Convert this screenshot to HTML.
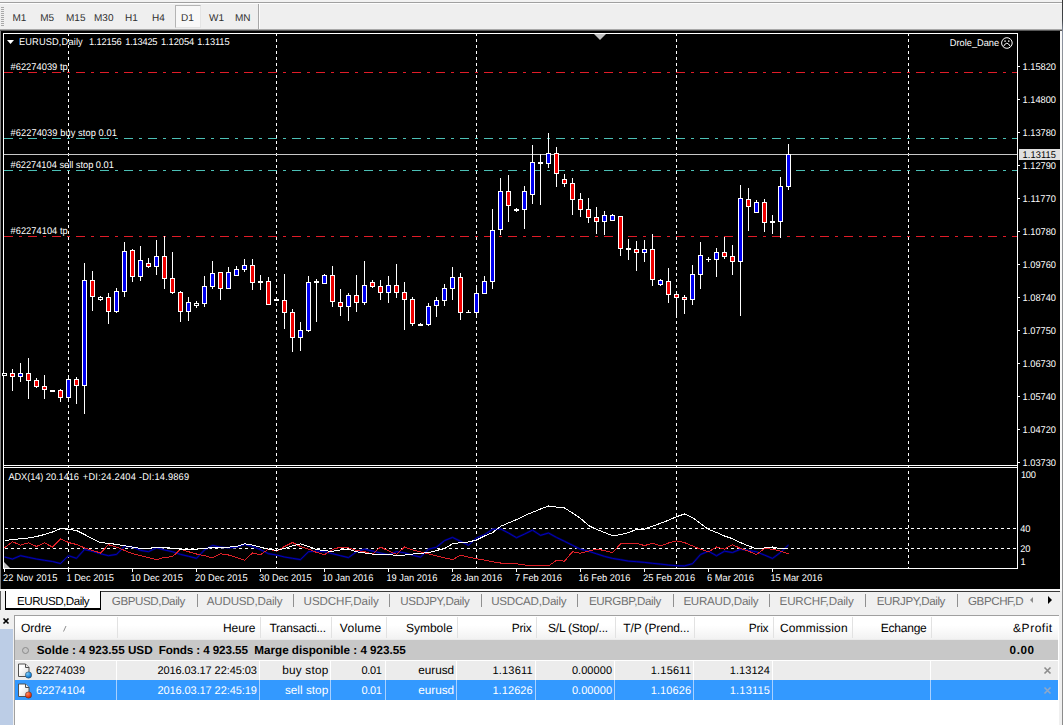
<!DOCTYPE html>
<html><head><meta charset="utf-8"><title>EURUSD,Daily</title>
<style>
html,body{margin:0;padding:0;background:#f0f0f0;}
body{width:1063px;height:725px;overflow:hidden;position:relative;font-family:"Liberation Sans",Arial,sans-serif;}
.abs{position:absolute;}
.tb{position:absolute;top:13px;font-size:10px;color:#303030;line-height:12px;white-space:nowrap;text-rendering:geometricPrecision;}
.tab{position:absolute;top:594px;font-size:11px;line-height:14px;color:#808080;white-space:nowrap;letter-spacing:-0.1px;}
.tsep{position:absolute;top:594px;width:1px;height:13px;background:#909090;}
.th{position:absolute;top:621px;font-size:11px;line-height:14px;color:#000;white-space:nowrap;}
.td{position:absolute;font-size:11px;line-height:14px;color:#000;white-space:nowrap;}
.r{text-align:right;}
.vs{position:absolute;width:1px;}
</style></head><body>

<div class="abs" style="left:0;top:0;width:1063px;height:31px;background:#f2f2f2"></div>
<div class="abs" style="left:0;top:2px;width:1063px;height:1px;background:#a0a0a0"></div>
<div class="abs" style="left:0;top:3px;width:1063px;height:1px;background:#fdfdfd"></div>
<div class="abs" style="left:0;top:4px;width:1063px;height:25px;background:#efefef"></div>
<div class="abs" style="left:0;top:29px;width:1063px;height:1px;background:#a8a8a8"></div>
<div class="abs" style="left:0;top:30px;width:1063px;height:1px;background:#585858"></div>
<div class="abs" style="left:1px;top:7px;width:3px;height:20px;background:repeating-linear-gradient(#a8a8a8 0 1px,#efefef 1px 2px)"></div>
<div class="abs" style="left:175px;top:5px;width:24px;height:21px;border:1px solid #b4b4b4;border-right-color:#e4e4e4;border-bottom-color:#e4e4e4;background:#f8f8f8"></div>
<div class="tb" style="left:12.4px">M1</div>
<div class="tb" style="left:40.2px">M5</div>
<div class="tb" style="left:66px">M15</div>
<div class="tb" style="left:94px">M30</div>
<div class="tb" style="left:125px">H1</div>
<div class="tb" style="left:152px">H4</div>
<div class="tb" style="left:181px">D1</div>
<div class="tb" style="left:209px">W1</div>
<div class="tb" style="left:235px">MN</div>
<div class="abs" style="left:258px;top:4px;width:1px;height:25px;background:#a8a8a8"></div>
<div class="abs" style="left:259px;top:4px;width:1px;height:25px;background:#fcfcfc"></div>
<div class="abs" style="left:0;top:31px;width:1px;height:558px;background:#808080"></div>
<div class="abs" style="left:1060px;top:31px;width:3px;height:558px;background:#f8f8f8"></div>
<svg width="1063" height="725" viewBox="0 0 1063 725" style="position:absolute;left:0;top:0" shape-rendering="crispEdges" font-family="Liberation Sans, Arial, sans-serif" font-size="9.25px">
<rect x="1" y="31" width="1059" height="558" fill="#000"/>
<g fill="#fff">
<rect x="3" y="33" width="1015" height="1"/>
<rect x="3" y="33" width="1" height="536"/>
<rect x="1017" y="33" width="1" height="536"/>
<rect x="3" y="465" width="1015" height="1"/>
<rect x="3" y="467" width="1015" height="1"/>
<rect x="3" y="568" width="1015" height="1"/>
</g>
<rect x="4" y="466" width="1013" height="1" fill="#000"/>
<line x1="68.5" y1="33" x2="68.5" y2="568" stroke="#fff" stroke-width="1" stroke-dasharray="3 3"/>
<line x1="276.5" y1="33" x2="276.5" y2="568" stroke="#fff" stroke-width="1" stroke-dasharray="3 3"/>
<line x1="476.5" y1="33" x2="476.5" y2="568" stroke="#fff" stroke-width="1" stroke-dasharray="3 3"/>
<line x1="676.5" y1="33" x2="676.5" y2="568" stroke="#fff" stroke-width="1" stroke-dasharray="3 3"/>
<line x1="908.5" y1="33" x2="908.5" y2="568" stroke="#fff" stroke-width="1" stroke-dasharray="3 3"/>
<line x1="5" y1="528.5" x2="1017" y2="528.5" stroke="#fff" stroke-width="1" stroke-dasharray="3 3"/>
<line x1="5" y1="548.5" x2="1017" y2="548.5" stroke="#fff" stroke-width="1" stroke-dasharray="3 3"/>
<line x1="4" y1="72.5" x2="1017" y2="72.5" stroke="#e01c28" stroke-width="1" stroke-dasharray="9 6 3 6"/>
<line x1="4" y1="236.5" x2="1017" y2="236.5" stroke="#e01c28" stroke-width="1" stroke-dasharray="9 6 3 6"/>
<line x1="4" y1="138.5" x2="1017" y2="138.5" stroke="#4cc0b6" stroke-width="1" stroke-dasharray="9 6 3 6"/>
<line x1="4" y1="170.5" x2="1017" y2="170.5" stroke="#4cc0b6" stroke-width="1" stroke-dasharray="9 6 3 6"/>
<rect x="4" y="154" width="1013" height="1" fill="#c8c8c8"/>
<rect x="4" y="373" width="1" height="3" fill="#fff"/>
<rect x="2" y="373" width="5" height="3" fill="#fff"/>
<rect x="3" y="374" width="3" height="1" fill="#000"/>
<rect x="12" y="369" width="1" height="22" fill="#fff"/>
<rect x="10" y="373" width="5" height="4" fill="#fff"/>
<rect x="11" y="374" width="3" height="2" fill="#f00000"/>
<rect x="20" y="363" width="1" height="19" fill="#fff"/>
<rect x="18" y="373" width="5" height="4" fill="#fff"/>
<rect x="19" y="374" width="3" height="2" fill="#0000f0"/>
<rect x="28" y="358" width="1" height="41" fill="#fff"/>
<rect x="26" y="373" width="5" height="8" fill="#fff"/>
<rect x="27" y="374" width="3" height="6" fill="#f00000"/>
<rect x="36" y="378" width="1" height="10" fill="#fff"/>
<rect x="34" y="380" width="5" height="7" fill="#fff"/>
<rect x="35" y="381" width="3" height="5" fill="#f00000"/>
<rect x="44" y="375" width="1" height="24" fill="#fff"/>
<rect x="42" y="386" width="5" height="4" fill="#fff"/>
<rect x="43" y="387" width="3" height="2" fill="#f00000"/>
<rect x="52" y="390" width="1" height="2" fill="#fff"/>
<rect x="50" y="390" width="5" height="2" fill="#fff"/>
<rect x="60" y="389" width="1" height="13" fill="#fff"/>
<rect x="58" y="390" width="5" height="8" fill="#fff"/>
<rect x="59" y="391" width="3" height="6" fill="#f00000"/>
<rect x="68" y="375" width="1" height="27" fill="#fff"/>
<rect x="66" y="379" width="5" height="19" fill="#fff"/>
<rect x="67" y="380" width="3" height="17" fill="#0000f0"/>
<rect x="76" y="377" width="1" height="27" fill="#fff"/>
<rect x="74" y="379" width="5" height="7" fill="#fff"/>
<rect x="75" y="380" width="3" height="5" fill="#f00000"/>
<rect x="84" y="263" width="1" height="151" fill="#fff"/>
<rect x="82" y="280" width="5" height="106" fill="#fff"/>
<rect x="83" y="281" width="3" height="104" fill="#0000f0"/>
<rect x="92" y="271" width="1" height="40" fill="#fff"/>
<rect x="90" y="280" width="5" height="17" fill="#fff"/>
<rect x="91" y="281" width="3" height="15" fill="#f00000"/>
<rect x="100" y="296" width="1" height="5" fill="#fff"/>
<rect x="98" y="297" width="5" height="3" fill="#fff"/>
<rect x="99" y="298" width="3" height="1" fill="#000"/>
<rect x="108" y="293" width="1" height="31" fill="#fff"/>
<rect x="106" y="297" width="5" height="15" fill="#fff"/>
<rect x="107" y="298" width="3" height="13" fill="#f00000"/>
<rect x="116" y="288" width="1" height="25" fill="#fff"/>
<rect x="114" y="291" width="5" height="21" fill="#fff"/>
<rect x="115" y="292" width="3" height="19" fill="#0000f0"/>
<rect x="124" y="242" width="1" height="55" fill="#fff"/>
<rect x="122" y="251" width="5" height="41" fill="#fff"/>
<rect x="123" y="252" width="3" height="39" fill="#0000f0"/>
<rect x="132" y="249" width="1" height="33" fill="#fff"/>
<rect x="130" y="250" width="5" height="27" fill="#fff"/>
<rect x="131" y="251" width="3" height="25" fill="#f00000"/>
<rect x="140" y="246" width="1" height="35" fill="#fff"/>
<rect x="138" y="260" width="5" height="17" fill="#fff"/>
<rect x="139" y="261" width="3" height="15" fill="#0000f0"/>
<rect x="148" y="258" width="1" height="10" fill="#fff"/>
<rect x="146" y="263" width="5" height="4" fill="#fff"/>
<rect x="147" y="264" width="3" height="2" fill="#f00000"/>
<rect x="156" y="240" width="1" height="35" fill="#fff"/>
<rect x="154" y="256" width="5" height="11" fill="#fff"/>
<rect x="155" y="257" width="3" height="9" fill="#0000f0"/>
<rect x="164" y="236" width="1" height="53" fill="#fff"/>
<rect x="162" y="256" width="5" height="23" fill="#fff"/>
<rect x="163" y="257" width="3" height="21" fill="#f00000"/>
<rect x="172" y="252" width="1" height="42" fill="#fff"/>
<rect x="170" y="278" width="5" height="15" fill="#fff"/>
<rect x="171" y="279" width="3" height="13" fill="#f00000"/>
<rect x="180" y="291" width="1" height="31" fill="#fff"/>
<rect x="178" y="292" width="5" height="20" fill="#fff"/>
<rect x="179" y="293" width="3" height="18" fill="#f00000"/>
<rect x="188" y="297" width="1" height="24" fill="#fff"/>
<rect x="186" y="302" width="5" height="10" fill="#fff"/>
<rect x="187" y="303" width="3" height="8" fill="#0000f0"/>
<rect x="196" y="301" width="1" height="7" fill="#fff"/>
<rect x="194" y="303" width="5" height="3" fill="#fff"/>
<rect x="195" y="304" width="3" height="1" fill="#000"/>
<rect x="204" y="276" width="1" height="31" fill="#fff"/>
<rect x="202" y="286" width="5" height="18" fill="#fff"/>
<rect x="203" y="287" width="3" height="16" fill="#0000f0"/>
<rect x="212" y="261" width="1" height="28" fill="#fff"/>
<rect x="210" y="273" width="5" height="14" fill="#fff"/>
<rect x="211" y="274" width="3" height="12" fill="#0000f0"/>
<rect x="220" y="272" width="1" height="28" fill="#fff"/>
<rect x="218" y="272" width="5" height="17" fill="#fff"/>
<rect x="219" y="273" width="3" height="15" fill="#f00000"/>
<rect x="228" y="267" width="1" height="22" fill="#fff"/>
<rect x="226" y="272" width="5" height="17" fill="#fff"/>
<rect x="227" y="273" width="3" height="15" fill="#0000f0"/>
<rect x="236" y="266" width="1" height="10" fill="#fff"/>
<rect x="234" y="269" width="5" height="7" fill="#fff"/>
<rect x="235" y="270" width="3" height="5" fill="#0000f0"/>
<rect x="244" y="259" width="1" height="13" fill="#fff"/>
<rect x="242" y="265" width="5" height="5" fill="#fff"/>
<rect x="243" y="266" width="3" height="3" fill="#0000f0"/>
<rect x="252" y="259" width="1" height="31" fill="#fff"/>
<rect x="250" y="265" width="5" height="18" fill="#fff"/>
<rect x="251" y="266" width="3" height="16" fill="#f00000"/>
<rect x="260" y="275" width="1" height="15" fill="#fff"/>
<rect x="258" y="281" width="5" height="2" fill="#fff"/>
<rect x="268" y="277" width="1" height="28" fill="#fff"/>
<rect x="266" y="281" width="5" height="24" fill="#fff"/>
<rect x="267" y="282" width="3" height="22" fill="#f00000"/>
<rect x="276" y="297" width="1" height="4" fill="#fff"/>
<rect x="274" y="299" width="5" height="2" fill="#fff"/>
<rect x="284" y="274" width="1" height="55" fill="#fff"/>
<rect x="282" y="300" width="5" height="13" fill="#fff"/>
<rect x="283" y="301" width="3" height="11" fill="#f00000"/>
<rect x="292" y="309" width="1" height="43" fill="#fff"/>
<rect x="290" y="312" width="5" height="26" fill="#fff"/>
<rect x="291" y="313" width="3" height="24" fill="#f00000"/>
<rect x="300" y="322" width="1" height="29" fill="#fff"/>
<rect x="298" y="330" width="5" height="8" fill="#fff"/>
<rect x="299" y="331" width="3" height="6" fill="#0000f0"/>
<rect x="308" y="276" width="1" height="56" fill="#fff"/>
<rect x="306" y="282" width="5" height="49" fill="#fff"/>
<rect x="307" y="283" width="3" height="47" fill="#0000f0"/>
<rect x="316" y="279" width="1" height="43" fill="#fff"/>
<rect x="314" y="281" width="5" height="2" fill="#fff"/>
<rect x="324" y="274" width="1" height="10" fill="#fff"/>
<rect x="322" y="275" width="5" height="9" fill="#fff"/>
<rect x="323" y="276" width="3" height="7" fill="#0000f0"/>
<rect x="332" y="266" width="1" height="41" fill="#fff"/>
<rect x="330" y="275" width="5" height="27" fill="#fff"/>
<rect x="331" y="276" width="3" height="25" fill="#f00000"/>
<rect x="340" y="289" width="1" height="27" fill="#fff"/>
<rect x="338" y="302" width="5" height="5" fill="#fff"/>
<rect x="339" y="303" width="3" height="3" fill="#f00000"/>
<rect x="348" y="293" width="1" height="28" fill="#fff"/>
<rect x="346" y="295" width="5" height="12" fill="#fff"/>
<rect x="347" y="296" width="3" height="10" fill="#0000f0"/>
<rect x="356" y="275" width="1" height="37" fill="#fff"/>
<rect x="354" y="295" width="5" height="8" fill="#fff"/>
<rect x="355" y="296" width="3" height="6" fill="#f00000"/>
<rect x="364" y="261" width="1" height="44" fill="#fff"/>
<rect x="362" y="285" width="5" height="18" fill="#fff"/>
<rect x="363" y="286" width="3" height="16" fill="#0000f0"/>
<rect x="372" y="280" width="1" height="8" fill="#fff"/>
<rect x="370" y="282" width="5" height="5" fill="#fff"/>
<rect x="371" y="283" width="3" height="3" fill="#f00000"/>
<rect x="380" y="280" width="1" height="20" fill="#fff"/>
<rect x="378" y="286" width="5" height="7" fill="#fff"/>
<rect x="379" y="287" width="3" height="5" fill="#f00000"/>
<rect x="388" y="276" width="1" height="27" fill="#fff"/>
<rect x="386" y="285" width="5" height="8" fill="#fff"/>
<rect x="387" y="286" width="3" height="6" fill="#0000f0"/>
<rect x="396" y="264" width="1" height="34" fill="#fff"/>
<rect x="394" y="285" width="5" height="8" fill="#fff"/>
<rect x="395" y="286" width="3" height="6" fill="#f00000"/>
<rect x="404" y="282" width="1" height="48" fill="#fff"/>
<rect x="402" y="292" width="5" height="8" fill="#fff"/>
<rect x="403" y="293" width="3" height="6" fill="#f00000"/>
<rect x="412" y="297" width="1" height="29" fill="#fff"/>
<rect x="410" y="299" width="5" height="25" fill="#fff"/>
<rect x="411" y="300" width="3" height="23" fill="#f00000"/>
<rect x="420" y="323" width="1" height="3" fill="#fff"/>
<rect x="418" y="324" width="5" height="2" fill="#fff"/>
<rect x="428" y="303" width="1" height="23" fill="#fff"/>
<rect x="426" y="306" width="5" height="19" fill="#fff"/>
<rect x="427" y="307" width="3" height="17" fill="#0000f0"/>
<rect x="436" y="297" width="1" height="20" fill="#fff"/>
<rect x="434" y="300" width="5" height="6" fill="#fff"/>
<rect x="435" y="301" width="3" height="4" fill="#0000f0"/>
<rect x="444" y="284" width="1" height="22" fill="#fff"/>
<rect x="442" y="288" width="5" height="13" fill="#fff"/>
<rect x="443" y="289" width="3" height="11" fill="#0000f0"/>
<rect x="452" y="267" width="1" height="33" fill="#fff"/>
<rect x="450" y="277" width="5" height="12" fill="#fff"/>
<rect x="451" y="278" width="3" height="10" fill="#0000f0"/>
<rect x="460" y="273" width="1" height="47" fill="#fff"/>
<rect x="458" y="277" width="5" height="36" fill="#fff"/>
<rect x="459" y="278" width="3" height="34" fill="#f00000"/>
<rect x="468" y="310" width="1" height="3" fill="#fff"/>
<rect x="466" y="312" width="5" height="1" fill="#fff"/>
<rect x="476" y="285" width="1" height="33" fill="#fff"/>
<rect x="474" y="293" width="5" height="20" fill="#fff"/>
<rect x="475" y="294" width="3" height="18" fill="#0000f0"/>
<rect x="484" y="276" width="1" height="18" fill="#fff"/>
<rect x="482" y="281" width="5" height="13" fill="#fff"/>
<rect x="483" y="282" width="3" height="11" fill="#0000f0"/>
<rect x="492" y="209" width="1" height="80" fill="#fff"/>
<rect x="490" y="230" width="5" height="52" fill="#fff"/>
<rect x="491" y="231" width="3" height="50" fill="#0000f0"/>
<rect x="500" y="178" width="1" height="57" fill="#fff"/>
<rect x="498" y="191" width="5" height="39" fill="#fff"/>
<rect x="499" y="192" width="3" height="37" fill="#0000f0"/>
<rect x="508" y="175" width="1" height="47" fill="#fff"/>
<rect x="506" y="191" width="5" height="15" fill="#fff"/>
<rect x="507" y="192" width="3" height="13" fill="#f00000"/>
<rect x="516" y="208" width="1" height="4" fill="#fff"/>
<rect x="514" y="209" width="5" height="2" fill="#fff"/>
<rect x="524" y="186" width="1" height="43" fill="#fff"/>
<rect x="522" y="191" width="5" height="19" fill="#fff"/>
<rect x="523" y="192" width="3" height="17" fill="#0000f0"/>
<rect x="532" y="145" width="1" height="59" fill="#fff"/>
<rect x="530" y="162" width="5" height="33" fill="#fff"/>
<rect x="531" y="163" width="3" height="31" fill="#0000f0"/>
<rect x="540" y="154" width="1" height="51" fill="#fff"/>
<rect x="538" y="162" width="5" height="2" fill="#fff"/>
<rect x="548" y="133" width="1" height="35" fill="#fff"/>
<rect x="546" y="153" width="5" height="11" fill="#fff"/>
<rect x="547" y="154" width="3" height="9" fill="#0000f0"/>
<rect x="556" y="147" width="1" height="40" fill="#fff"/>
<rect x="554" y="153" width="5" height="21" fill="#fff"/>
<rect x="555" y="154" width="3" height="19" fill="#f00000"/>
<rect x="564" y="174" width="1" height="13" fill="#fff"/>
<rect x="562" y="179" width="5" height="5" fill="#fff"/>
<rect x="563" y="180" width="3" height="3" fill="#f00000"/>
<rect x="572" y="178" width="1" height="37" fill="#fff"/>
<rect x="570" y="183" width="5" height="17" fill="#fff"/>
<rect x="571" y="184" width="3" height="15" fill="#f00000"/>
<rect x="580" y="193" width="1" height="24" fill="#fff"/>
<rect x="578" y="199" width="5" height="11" fill="#fff"/>
<rect x="579" y="200" width="3" height="9" fill="#f00000"/>
<rect x="588" y="198" width="1" height="25" fill="#fff"/>
<rect x="586" y="209" width="5" height="9" fill="#fff"/>
<rect x="587" y="210" width="3" height="7" fill="#f00000"/>
<rect x="596" y="207" width="1" height="27" fill="#fff"/>
<rect x="594" y="217" width="5" height="5" fill="#fff"/>
<rect x="595" y="218" width="3" height="3" fill="#f00000"/>
<rect x="604" y="211" width="1" height="24" fill="#fff"/>
<rect x="602" y="215" width="5" height="7" fill="#fff"/>
<rect x="603" y="216" width="3" height="5" fill="#0000f0"/>
<rect x="612" y="214" width="1" height="7" fill="#fff"/>
<rect x="610" y="215" width="5" height="6" fill="#fff"/>
<rect x="611" y="216" width="3" height="4" fill="#0000f0"/>
<rect x="620" y="216" width="1" height="40" fill="#fff"/>
<rect x="618" y="216" width="5" height="33" fill="#fff"/>
<rect x="619" y="217" width="3" height="31" fill="#f00000"/>
<rect x="628" y="239" width="1" height="21" fill="#fff"/>
<rect x="626" y="248" width="5" height="2" fill="#fff"/>
<rect x="636" y="241" width="1" height="30" fill="#fff"/>
<rect x="634" y="249" width="5" height="4" fill="#fff"/>
<rect x="635" y="250" width="3" height="2" fill="#f00000"/>
<rect x="644" y="240" width="1" height="22" fill="#fff"/>
<rect x="642" y="249" width="5" height="4" fill="#fff"/>
<rect x="643" y="250" width="3" height="2" fill="#0000f0"/>
<rect x="652" y="234" width="1" height="52" fill="#fff"/>
<rect x="650" y="249" width="5" height="31" fill="#fff"/>
<rect x="651" y="250" width="3" height="29" fill="#f00000"/>
<rect x="660" y="279" width="1" height="7" fill="#fff"/>
<rect x="658" y="280" width="5" height="5" fill="#fff"/>
<rect x="659" y="281" width="3" height="3" fill="#0000f0"/>
<rect x="668" y="268" width="1" height="35" fill="#fff"/>
<rect x="666" y="281" width="5" height="14" fill="#fff"/>
<rect x="667" y="282" width="3" height="12" fill="#f00000"/>
<rect x="676" y="291" width="1" height="27" fill="#fff"/>
<rect x="674" y="294" width="5" height="4" fill="#fff"/>
<rect x="675" y="295" width="3" height="2" fill="#f00000"/>
<rect x="684" y="295" width="1" height="19" fill="#fff"/>
<rect x="682" y="297" width="5" height="3" fill="#fff"/>
<rect x="683" y="298" width="3" height="1" fill="#f00000"/>
<rect x="692" y="265" width="1" height="40" fill="#fff"/>
<rect x="690" y="274" width="5" height="26" fill="#fff"/>
<rect x="691" y="275" width="3" height="24" fill="#0000f0"/>
<rect x="700" y="242" width="1" height="47" fill="#fff"/>
<rect x="698" y="255" width="5" height="20" fill="#fff"/>
<rect x="699" y="256" width="3" height="18" fill="#0000f0"/>
<rect x="708" y="257" width="1" height="5" fill="#fff"/>
<rect x="706" y="259" width="5" height="1" fill="#fff"/>
<rect x="716" y="248" width="1" height="29" fill="#fff"/>
<rect x="714" y="252" width="5" height="8" fill="#fff"/>
<rect x="715" y="253" width="3" height="6" fill="#0000f0"/>
<rect x="724" y="237" width="1" height="22" fill="#fff"/>
<rect x="722" y="252" width="5" height="5" fill="#fff"/>
<rect x="723" y="253" width="3" height="3" fill="#f00000"/>
<rect x="732" y="245" width="1" height="30" fill="#fff"/>
<rect x="730" y="256" width="5" height="6" fill="#fff"/>
<rect x="731" y="257" width="3" height="4" fill="#f00000"/>
<rect x="740" y="185" width="1" height="131" fill="#fff"/>
<rect x="738" y="198" width="5" height="64" fill="#fff"/>
<rect x="739" y="199" width="3" height="62" fill="#0000f0"/>
<rect x="748" y="188" width="1" height="43" fill="#fff"/>
<rect x="746" y="199" width="5" height="8" fill="#fff"/>
<rect x="747" y="200" width="3" height="6" fill="#f00000"/>
<rect x="756" y="200" width="1" height="13" fill="#fff"/>
<rect x="754" y="202" width="5" height="11" fill="#fff"/>
<rect x="755" y="203" width="3" height="9" fill="#0000f0"/>
<rect x="764" y="199" width="1" height="33" fill="#fff"/>
<rect x="762" y="202" width="5" height="21" fill="#fff"/>
<rect x="763" y="203" width="3" height="19" fill="#f00000"/>
<rect x="772" y="215" width="1" height="19" fill="#fff"/>
<rect x="770" y="221" width="5" height="2" fill="#fff"/>
<rect x="780" y="177" width="1" height="61" fill="#fff"/>
<rect x="778" y="186" width="5" height="36" fill="#fff"/>
<rect x="779" y="187" width="3" height="34" fill="#0000f0"/>
<rect x="788" y="144" width="1" height="46" fill="#fff"/>
<rect x="786" y="154" width="5" height="33" fill="#fff"/>
<rect x="787" y="155" width="3" height="31" fill="#0000f0"/>
<polyline points="4.5,557.0 12.5,559.0 20.5,555.7 28.5,557.4 36.5,559.0 44.5,560.3 52.5,561.5 60.5,563.5 68.5,555.7 76.5,558.3 84.5,549.5 92.5,551.3 100.5,553.7 108.5,555.7 116.5,554.4 124.5,546.1 132.5,547.1 140.5,550.4 148.5,551.7 156.5,547.8 164.5,550.0 172.5,551.7 180.5,554.4 188.5,556.3 196.5,558.3 204.5,550.0 212.5,545.5 220.5,547.1 228.5,547.8 236.5,547.1 244.5,544.5 252.5,546.5 260.5,549.7 268.5,553.7 276.5,555.0 284.5,557.0 292.5,558.3 300.5,559.6 308.5,551.7 316.5,551.1 324.5,551.7 332.5,553.7 340.5,555.7 348.5,557.6 356.5,551.7 364.5,549.1 372.5,551.1 380.5,553.0 388.5,554.7 396.5,551.7 404.5,552.8 412.5,555.1 420.5,557.1 428.5,549.2 436.5,547.2 444.5,540.6 452.5,537.4 460.5,541.3 468.5,545.3 476.5,538.0 484.5,534.7 492.5,529.4 500.5,528.8 508.5,533.0 516.5,537.7 524.5,534.1 532.5,530.1 540.5,535.4 548.5,533.0 556.5,537.4 564.5,541.3 572.5,545.3 580.5,549.2 588.5,551.2 596.5,553.8 604.5,556.4 612.5,558.4 620.5,559.7 628.5,561.1 636.5,561.7 644.5,562.4 652.5,563.3 660.5,564.1 668.5,565.0 676.5,565.7 684.5,565.9 692.5,563.7 700.5,554.5 708.5,551.2 716.5,555.8 724.5,551.2 732.5,552.5 740.5,549.2 748.5,550.5 756.5,551.8 764.5,555.1 772.5,558.4 780.5,552.5 788.5,545.0" fill="none" stroke="#000044" stroke-width="2.2" shape-rendering="auto"/>
<polyline points="4.5,557.0 12.5,559.0 20.5,555.7 28.5,557.4 36.5,559.0 44.5,560.3 52.5,561.5 60.5,563.5 68.5,555.7 76.5,558.3 84.5,549.5 92.5,551.3 100.5,553.7 108.5,555.7 116.5,554.4 124.5,546.1 132.5,547.1 140.5,550.4 148.5,551.7 156.5,547.8 164.5,550.0 172.5,551.7 180.5,554.4 188.5,556.3 196.5,558.3 204.5,550.0 212.5,545.5 220.5,547.1 228.5,547.8 236.5,547.1 244.5,544.5 252.5,546.5 260.5,549.7 268.5,553.7 276.5,555.0 284.5,557.0 292.5,558.3 300.5,559.6 308.5,551.7 316.5,551.1 324.5,551.7 332.5,553.7 340.5,555.7 348.5,557.6 356.5,551.7 364.5,549.1 372.5,551.1 380.5,553.0 388.5,554.7 396.5,551.7 404.5,552.8 412.5,555.1 420.5,557.1 428.5,549.2 436.5,547.2 444.5,540.6 452.5,537.4 460.5,541.3 468.5,545.3 476.5,538.0 484.5,534.7 492.5,529.4 500.5,528.8 508.5,533.0 516.5,537.7 524.5,534.1 532.5,530.1 540.5,535.4 548.5,533.0 556.5,537.4 564.5,541.3 572.5,545.3 580.5,549.2 588.5,551.2 596.5,553.8 604.5,556.4 612.5,558.4 620.5,559.7 628.5,561.1 636.5,561.7 644.5,562.4 652.5,563.3 660.5,564.1 668.5,565.0 676.5,565.7 684.5,565.9 692.5,563.7 700.5,554.5 708.5,551.2 716.5,555.8 724.5,551.2 732.5,552.5 740.5,549.2 748.5,550.5 756.5,551.8 764.5,555.1 772.5,558.4 780.5,552.5 788.5,545.0" fill="none" stroke="#0000c0" stroke-width="1" shape-rendering="auto"/>
<polyline points="4.5,547.8 12.5,541.8 20.5,545.1 28.5,542.8 36.5,546.5 44.5,542.8 52.5,547.1 60.5,538.9 68.5,542.5 76.5,544.5 84.5,547.8 92.5,550.4 100.5,553.0 108.5,544.7 116.5,547.1 124.5,550.4 132.5,553.7 140.5,555.7 148.5,557.6 156.5,559.6 164.5,557.4 172.5,556.7 180.5,549.1 188.5,551.7 196.5,554.0 204.5,555.7 212.5,557.9 220.5,553.7 228.5,555.0 236.5,557.4 244.5,560.3 252.5,553.0 260.5,554.7 268.5,549.1 276.5,551.1 284.5,546.5 292.5,542.5 300.5,546.5 308.5,549.1 316.5,552.4 324.5,554.7 332.5,549.5 340.5,547.1 348.5,547.8 356.5,550.4 364.5,551.7 372.5,554.1 380.5,547.1 388.5,550.8 396.5,554.4 404.5,547.0 412.5,549.9 420.5,551.8 428.5,553.8 436.5,555.8 444.5,557.8 452.5,559.7 460.5,555.1 468.5,557.1 476.5,558.8 484.5,560.1 492.5,561.7 500.5,563.0 508.5,563.0 516.5,563.7 524.5,565.0 532.5,565.9 540.5,565.9 548.5,565.9 556.5,560.4 564.5,561.1 572.5,551.8 580.5,553.2 588.5,551.2 596.5,549.2 604.5,550.5 612.5,552.8 620.5,543.9 628.5,543.9 636.5,543.3 644.5,545.6 652.5,543.3 660.5,545.9 668.5,543.0 676.5,540.9 684.5,542.6 692.5,545.9 700.5,549.2 708.5,551.8 716.5,547.0 724.5,549.2 732.5,544.6 740.5,548.5 748.5,551.2 756.5,554.5 764.5,548.5 772.5,549.2 780.5,551.2 788.5,554.0" fill="none" stroke="#dc2028" stroke-width="1" shape-rendering="crispEdges"/>
<polyline points="4.5,541.2 12.5,539.2 20.5,538.9 28.5,537.9 36.5,536.5 44.5,534.5 52.5,532.0 60.5,528.7 68.5,529.3 76.5,530.5 84.5,534.5 92.5,538.8 100.5,542.8 108.5,543.2 116.5,544.5 124.5,545.8 132.5,547.1 140.5,548.5 148.5,548.5 156.5,547.1 164.5,547.1 172.5,548.5 180.5,549.1 188.5,549.1 196.5,549.1 204.5,548.7 212.5,547.1 220.5,547.8 228.5,547.1 236.5,546.7 244.5,543.8 252.5,545.1 260.5,547.1 268.5,549.1 276.5,550.4 284.5,548.5 292.5,545.8 300.5,543.8 308.5,546.5 316.5,549.5 324.5,550.8 332.5,551.3 340.5,550.0 348.5,549.1 356.5,551.7 364.5,553.0 372.5,554.1 380.5,554.1 388.5,554.1 396.5,555.7 404.5,555.1 412.5,554.1 420.5,553.2 428.5,552.8 436.5,550.5 444.5,548.5 452.5,543.9 460.5,542.6 468.5,542.0 476.5,540.0 484.5,536.0 492.5,532.7 500.5,526.4 508.5,522.9 516.5,519.6 524.5,515.6 532.5,512.3 540.5,509.0 548.5,506.0 556.5,507.1 564.5,508.0 572.5,513.0 580.5,518.3 588.5,525.5 596.5,529.4 604.5,532.5 612.5,535.6 620.5,534.7 628.5,532.7 636.5,529.4 644.5,529.1 652.5,526.2 660.5,523.3 668.5,520.2 676.5,516.7 684.5,514.0 692.5,517.6 700.5,523.5 708.5,529.4 716.5,532.5 724.5,536.0 732.5,538.7 740.5,542.6 748.5,545.9 756.5,548.9 764.5,547.9 772.5,547.0 780.5,548.9 788.5,548.5" fill="none" stroke="#ffffff" stroke-width="1" shape-rendering="crispEdges"/>
<polygon points="594,34 606,34 600,40" fill="#c0c0c0" shape-rendering="auto"/>
<polygon points="4,562 4,568 10,568" fill="#c0c0c0" shape-rendering="auto"/>
<rect x="1018" y="66" width="2" height="1" fill="#fff"/>
<rect x="1018" y="99" width="2" height="1" fill="#fff"/>
<rect x="1018" y="132" width="2" height="1" fill="#fff"/>
<rect x="1018" y="165" width="2" height="1" fill="#fff"/>
<rect x="1018" y="198" width="2" height="1" fill="#fff"/>
<rect x="1018" y="231" width="2" height="1" fill="#fff"/>
<rect x="1018" y="264" width="2" height="1" fill="#fff"/>
<rect x="1018" y="297" width="2" height="1" fill="#fff"/>
<rect x="1018" y="330" width="2" height="1" fill="#fff"/>
<rect x="1018" y="363" width="2" height="1" fill="#fff"/>
<rect x="1018" y="396" width="2" height="1" fill="#fff"/>
<rect x="1018" y="429" width="2" height="1" fill="#fff"/>
<rect x="1018" y="462" width="2" height="1" fill="#fff"/>
<rect x="1019" y="149" width="41" height="11" fill="#e0e0e0"/>
<rect x="4" y="569" width="1" height="3" fill="#fff"/>
<rect x="68" y="569" width="1" height="3" fill="#fff"/>
<rect x="132" y="569" width="1" height="3" fill="#fff"/>
<rect x="196" y="569" width="1" height="3" fill="#fff"/>
<rect x="260" y="569" width="1" height="3" fill="#fff"/>
<rect x="324" y="569" width="1" height="3" fill="#fff"/>
<rect x="388" y="569" width="1" height="3" fill="#fff"/>
<rect x="452" y="569" width="1" height="3" fill="#fff"/>
<rect x="516" y="569" width="1" height="3" fill="#fff"/>
<rect x="580" y="569" width="1" height="3" fill="#fff"/>
<rect x="644" y="569" width="1" height="3" fill="#fff"/>
<rect x="708" y="569" width="1" height="3" fill="#fff"/>
<rect x="772" y="569" width="1" height="3" fill="#fff"/>
<polygon points="7,40 14,40 10.5,44" fill="#fff" shape-rendering="auto"/>
<g transform="scale(0.949 1)" font-size="9.75px" text-rendering="geometricPrecision">
<text x="1077.56" y="70" fill="#fff" textLength="35.19" lengthAdjust="spacing">1.15820</text>
<text x="1077.56" y="103" fill="#fff" textLength="35.19" lengthAdjust="spacing">1.14800</text>
<text x="1077.56" y="136" fill="#fff" textLength="35.19" lengthAdjust="spacing">1.13780</text>
<text x="1077.56" y="169" fill="#fff" textLength="35.19" lengthAdjust="spacing">1.12790</text>
<text x="1077.56" y="202" fill="#fff" textLength="35.19" lengthAdjust="spacing">1.11770</text>
<text x="1077.56" y="235" fill="#fff" textLength="35.19" lengthAdjust="spacing">1.10780</text>
<text x="1077.56" y="268" fill="#fff" textLength="35.19" lengthAdjust="spacing">1.09760</text>
<text x="1077.56" y="301" fill="#fff" textLength="35.19" lengthAdjust="spacing">1.08740</text>
<text x="1077.56" y="334" fill="#fff" textLength="35.19" lengthAdjust="spacing">1.07750</text>
<text x="1077.56" y="367" fill="#fff" textLength="35.19" lengthAdjust="spacing">1.06730</text>
<text x="1077.56" y="400" fill="#fff" textLength="35.19" lengthAdjust="spacing">1.05740</text>
<text x="1077.56" y="433" fill="#fff" textLength="35.19" lengthAdjust="spacing">1.04720</text>
<text x="1077.56" y="466" fill="#fff" textLength="35.19" lengthAdjust="spacing">1.03730</text>
<text x="1077.56" y="158" fill="#000" textLength="35.19" lengthAdjust="spacing">1.13115</text>
<text x="1075.76" y="478" fill="#fff" textLength="15.70" lengthAdjust="spacing">100</text>
<text x="1075.03" y="532" fill="#fff" textLength="10.75" lengthAdjust="spacing">40</text>
<text x="1075.03" y="552" fill="#fff" textLength="10.75" lengthAdjust="spacing">20</text>
<text x="1075.34" y="565" fill="#fff">1</text>
<text x="3.16" y="581" fill="#fff" textLength="57.22" lengthAdjust="spacing">22 Nov 2015</text>
<text x="69.97" y="581" fill="#fff" textLength="50.16" lengthAdjust="spacing">1 Dec 2015</text>
<text x="137.41" y="581" fill="#fff">10 Dec 2015</text>
<text x="205.58" y="581" fill="#fff">20 Dec 2015</text>
<text x="273.02" y="581" fill="#fff">30 Dec 2015</text>
<text x="339.73" y="581" fill="#fff">10 Jan 2016</text>
<text x="407.17" y="581" fill="#fff">19 Jan 2016</text>
<text x="475.34" y="581" fill="#fff">28 Jan 2016</text>
<text x="542.78" y="581" fill="#fff">7 Feb 2016</text>
<text x="609.48" y="581" fill="#fff">16 Feb 2016</text>
<text x="677.66" y="581" fill="#fff">25 Feb 2016</text>
<text x="745.10" y="581" fill="#fff">6 Mar 2016</text>
<text x="811.80" y="581" fill="#fff">15 Mar 2016</text>
<text x="20.02" y="45" fill="#fff" textLength="67.12" lengthAdjust="spacing">EURUSD,Daily</text>
<text x="93.78" y="45" fill="#fff" textLength="34.46" lengthAdjust="spacing">1.12156</text>
<text x="132.03" y="45" fill="#fff" textLength="33.93" lengthAdjust="spacing">1.13425</text>
<text x="169.65" y="45" fill="#fff" textLength="34.98" lengthAdjust="spacing">1.12054</text>
<text x="207.90" y="45" fill="#fff" textLength="34.04" lengthAdjust="spacing">1.13115</text>
<text x="11.06" y="70" fill="#fff" textLength="60.27" lengthAdjust="spacing">#62274039 tp</text>
<text x="11.06" y="136" fill="#fff" textLength="112.01" lengthAdjust="spacing">#62274039 buy stop 0.01</text>
<text x="11.06" y="168" fill="#fff" textLength="108.96" lengthAdjust="spacing">#62274104 sell stop 0.01</text>
<text x="11.06" y="234" fill="#fff" textLength="60.27" lengthAdjust="spacing">#62274104 tp</text>
<text x="8.96" y="480" fill="#fff" textLength="36.67" lengthAdjust="spacing">ADX(14)</text>
<text x="48.26" y="480" fill="#fff" textLength="34.98" lengthAdjust="spacing">20.1416</text>
<text x="87.25" y="480" fill="#fff" textLength="55.95" lengthAdjust="spacing">+DI:24.2404</text>
<text x="146.36" y="480" fill="#fff" textLength="52.90" lengthAdjust="spacing">-DI:14.9869</text>
<text x="1000.84" y="46" fill="#fff" textLength="52.05" lengthAdjust="spacing">Drole_Dane</text>
</g>
<g shape-rendering="auto" fill="none" stroke="#fff" stroke-width="1"><circle cx="1006.9" cy="43" r="5.3"/><path d="M1003.6 46.3 Q1006.9 40 1010.2 46.3"/></g>
<rect x="1004.4" y="40.4" width="1.3" height="1.5" fill="#fff" shape-rendering="auto"/><rect x="1008.1" y="40.4" width="1.3" height="1.5" fill="#fff" shape-rendering="auto"/>
</svg>
<div class="abs" style="left:0;top:589px;width:1063px;height:24px;background:#f0f0f0"></div>
<div class="abs" style="left:0;top:589px;width:1063px;height:2px;background:#f8f8f8"></div>
<div class="abs" style="left:101px;top:591px;width:959px;height:1px;background:#383838"></div>
<div class="abs" style="left:0;top:591px;width:1px;height:19px;background:#606060"></div>
<div class="abs" style="left:6px;top:589px;width:94px;height:2px;background:#fff"></div>
<div class="abs" style="left:5px;top:591px;width:94px;height:17px;background:#fff;border:1px solid #000;border-top:none;border-bottom-width:2px"></div>
<div class="tsep" style="left:197px"></div>
<div class="tsep" style="left:293px"></div>
<div class="tsep" style="left:389px"></div>
<div class="tsep" style="left:481px"></div>
<div class="tsep" style="left:577px"></div>
<div class="tsep" style="left:673px"></div>
<div class="tsep" style="left:769px"></div>
<div class="tsep" style="left:865px"></div>
<div class="tsep" style="left:957px"></div>
<div class="abs" style="left:1030px;top:597px;width:0;height:0;border:3.5px solid transparent;border-right:3.5px solid #8c8c8c;border-left:none"></div>
<div class="abs" style="left:1048px;top:596px;width:0;height:0;border:4px solid transparent;border-left:4px solid #000;border-right:none"></div>
<div class="abs" style="left:0;top:612px;width:1063px;height:113px;background:#f0f0f0"></div>
<div class="abs" style="left:0;top:629px;width:13px;height:96px;background:#bccde6"></div>
<div class="abs" style="left:14px;top:615px;width:1044px;height:110px;background:#fff;border-left:1px solid #a0a0a0;border-top:1px solid #a0a0a0"></div>
<div class="abs" style="left:15px;top:616px;width:1043px;height:23px;background:linear-gradient(#ffffff 40%,#f2f2f2)"></div>
<div class="abs" style="left:15px;top:639px;width:1043px;height:1px;background:#ececec"></div>
<div class="abs" style="left:15px;top:640px;width:1043px;height:20px;background:#c8c8c8"></div>
<div class="abs" style="left:15px;top:661px;width:1043px;height:19px;background:#ececec"></div>
<div class="abs" style="left:15px;top:680px;width:1043px;height:20px;background:#3399ff"></div>
<div class="vs" style="left:117px;top:617px;height:21px;background:#e2e2e2"></div>
<div class="vs" style="left:260px;top:617px;height:21px;background:#e2e2e2"></div>
<div class="vs" style="left:331px;top:617px;height:21px;background:#e2e2e2"></div>
<div class="vs" style="left:386px;top:617px;height:21px;background:#e2e2e2"></div>
<div class="vs" style="left:457px;top:617px;height:21px;background:#e2e2e2"></div>
<div class="vs" style="left:536px;top:617px;height:21px;background:#e2e2e2"></div>
<div class="vs" style="left:615px;top:617px;height:21px;background:#e2e2e2"></div>
<div class="vs" style="left:694px;top:617px;height:21px;background:#e2e2e2"></div>
<div class="vs" style="left:773px;top:617px;height:21px;background:#e2e2e2"></div>
<div class="vs" style="left:852px;top:617px;height:21px;background:#e2e2e2"></div>
<div class="vs" style="left:931px;top:617px;height:21px;background:#e2e2e2"></div>
<div class="vs" style="left:116px;top:661px;height:19px;background:#fff"></div>
<div class="vs" style="left:116px;top:680px;height:20px;background:#a8d0ff"></div>
<div class="vs" style="left:259px;top:661px;height:19px;background:#fff"></div>
<div class="vs" style="left:259px;top:680px;height:20px;background:#a8d0ff"></div>
<div class="vs" style="left:330px;top:661px;height:19px;background:#fff"></div>
<div class="vs" style="left:330px;top:680px;height:20px;background:#a8d0ff"></div>
<div class="vs" style="left:385px;top:661px;height:19px;background:#fff"></div>
<div class="vs" style="left:385px;top:680px;height:20px;background:#a8d0ff"></div>
<div class="vs" style="left:456px;top:661px;height:19px;background:#fff"></div>
<div class="vs" style="left:456px;top:680px;height:20px;background:#a8d0ff"></div>
<div class="vs" style="left:535px;top:661px;height:19px;background:#fff"></div>
<div class="vs" style="left:535px;top:680px;height:20px;background:#a8d0ff"></div>
<div class="vs" style="left:614px;top:661px;height:19px;background:#fff"></div>
<div class="vs" style="left:614px;top:680px;height:20px;background:#a8d0ff"></div>
<div class="vs" style="left:693px;top:661px;height:19px;background:#fff"></div>
<div class="vs" style="left:693px;top:680px;height:20px;background:#a8d0ff"></div>
<div class="vs" style="left:772px;top:661px;height:19px;background:#fff"></div>
<div class="vs" style="left:772px;top:680px;height:20px;background:#a8d0ff"></div>
<div class="vs" style="left:930px;top:661px;height:19px;background:#fff"></div>
<div class="vs" style="left:930px;top:680px;height:20px;background:#a8d0ff"></div>
<div class="abs" style="left:22px;top:647px;width:5px;height:5px;border:1px solid #8a8a8a;border-radius:50%;background:#c6c6c6"></div>
<svg width="1063" height="140" viewBox="0 585 1063 140" style="position:absolute;left:0;top:585px" font-family="Liberation Sans, Arial, sans-serif" text-rendering="geometricPrecision">
<defs><linearGradient id="pg" x1="0" y1="0" x2="1" y2="1"><stop offset="0.3" stop-color="#fff"/><stop offset="1" stop-color="#d4d4d4"/></linearGradient><radialGradient id="gb" cx="0.35" cy="0.3" r="0.8"><stop offset="0" stop-color="#7cc8f4"/><stop offset="0.6" stop-color="#1c88dc"/><stop offset="1" stop-color="#0c5ca8"/></radialGradient><radialGradient id="gr" cx="0.35" cy="0.3" r="0.8"><stop offset="0" stop-color="#ff8c60"/><stop offset="0.6" stop-color="#e83c14"/><stop offset="1" stop-color="#a82000"/></radialGradient></defs>
<text x="17.0" y="605" font-size="11.6px" fill="#000" textLength="72.6" lengthAdjust="spacing" xml:space="preserve">EURUSD,Daily</text>
<text x="111.8" y="605" font-size="11.6px" fill="#707070" textLength="73.5" lengthAdjust="spacing" xml:space="preserve">GBPUSD,Daily</text>
<text x="206.8" y="605" font-size="11.6px" fill="#707070" textLength="75.7" lengthAdjust="spacing" xml:space="preserve">AUDUSD,Daily</text>
<text x="303.6" y="605" font-size="11.6px" fill="#707070" textLength="75.1" lengthAdjust="spacing" xml:space="preserve">USDCHF,Daily</text>
<text x="400.3" y="605" font-size="11.6px" fill="#707070" textLength="69.5" lengthAdjust="spacing" xml:space="preserve">USDJPY,Daily</text>
<text x="491.2" y="605" font-size="11.6px" fill="#707070" textLength="75.4" lengthAdjust="spacing" xml:space="preserve">USDCAD,Daily</text>
<text x="589.0" y="605" font-size="11.6px" fill="#707070" textLength="72.3" lengthAdjust="spacing" xml:space="preserve">EURGBP,Daily</text>
<text x="683.4" y="605" font-size="11.6px" fill="#707070" textLength="75.1" lengthAdjust="spacing" xml:space="preserve">EURAUD,Daily</text>
<text x="779.6" y="605" font-size="11.6px" fill="#707070" textLength="74.2" lengthAdjust="spacing" xml:space="preserve">EURCHF,Daily</text>
<text x="876.8" y="605" font-size="11.6px" fill="#707070" textLength="68.6" lengthAdjust="spacing" xml:space="preserve">EURJPY,Daily</text>
<text x="968.0" y="605" font-size="11.6px" fill="#707070" textLength="55.6" lengthAdjust="spacing" xml:space="preserve">GBPCHF,D</text>
<path d="M3.5 618.5 L8.5 623.5 M8.5 618.5 L3.5 623.5" stroke="#000" stroke-width="1.7" fill="none"/>
<text x="21.1" y="632" font-size="12px" fill="#000" textLength="30.4" lengthAdjust="spacing" xml:space="preserve">Ordre</text>
<path d="M63.5 631.5 L66 626" stroke="#909090" stroke-width="1" fill="none"/>
<text x="222.9" y="632" font-size="12px" fill="#000" textLength="32.6" lengthAdjust="spacing" xml:space="preserve">Heure</text>
<text x="269.4" y="632" font-size="12px" fill="#000" textLength="56.7" lengthAdjust="spacing" xml:space="preserve">Transacti...</text>
<text x="339.8" y="632" font-size="12px" fill="#000" textLength="41.5" lengthAdjust="spacing" xml:space="preserve">Volume</text>
<text x="405.9" y="632" font-size="12px" fill="#000" textLength="46.7" lengthAdjust="spacing" xml:space="preserve">Symbole</text>
<text x="511.8" y="632" font-size="12px" fill="#000" textLength="19.9" lengthAdjust="spacing" xml:space="preserve">Prix</text>
<text x="548.1" y="632" font-size="12px" fill="#000" textLength="60.0" lengthAdjust="spacing" xml:space="preserve">S/L (Stop/...</text>
<text x="623.2" y="632" font-size="12px" fill="#000" textLength="66.4" lengthAdjust="spacing" xml:space="preserve">T/P (Prend...</text>
<text x="748.8" y="632" font-size="12px" fill="#000" textLength="19.8" lengthAdjust="spacing" xml:space="preserve">Prix</text>
<text x="779.9" y="632" font-size="12px" fill="#000" textLength="67.7" lengthAdjust="spacing" xml:space="preserve">Commission</text>
<text x="880.7" y="632" font-size="12px" fill="#000" textLength="46.1" lengthAdjust="spacing" xml:space="preserve">Echange</text>
<text x="1013.1" y="632" font-size="12px" fill="#000" textLength="39.1" lengthAdjust="spacing" xml:space="preserve">&amp;Profit</text>
<text x="36.8" y="654" font-size="11.7px" fill="#000" font-weight="bold" textLength="115.8" lengthAdjust="spacing" xml:space="preserve">Solde : 4 923.55 USD</text>
<text x="158.8" y="654" font-size="11.7px" fill="#000" font-weight="bold" textLength="89.1" lengthAdjust="spacing" xml:space="preserve">Fonds : 4 923.55</text>
<text x="254.3" y="654" font-size="11.7px" fill="#000" font-weight="bold" textLength="151.5" lengthAdjust="spacing" xml:space="preserve">Marge disponible : 4 923.55</text>
<text x="1009.6" y="654" font-size="11.7px" fill="#000" font-weight="bold" textLength="24.4" lengthAdjust="spacing" xml:space="preserve">0.00</text>
<text x="36.0" y="674" font-size="11px" fill="#000" textLength="49.0" lengthAdjust="spacing" xml:space="preserve">62274039</text>
<text x="157.5" y="674" font-size="11px" fill="#000" textLength="99.3" lengthAdjust="spacing" xml:space="preserve">2016.03.17 22:45:03</text>
<text x="282.3" y="674" font-size="11.8px" fill="#000" textLength="45.9" lengthAdjust="spacing" xml:space="preserve">buy stop</text>
<text x="361.5" y="674" font-size="11px" fill="#000" textLength="20.3" lengthAdjust="spacing" xml:space="preserve">0.01</text>
<text x="418.3" y="674" font-size="11.8px" fill="#000" textLength="35.8" lengthAdjust="spacing" xml:space="preserve">eurusd</text>
<text x="492.4" y="674" font-size="11px" fill="#000" textLength="40.3" lengthAdjust="spacing" xml:space="preserve">1.13611</text>
<text x="571.9" y="674" font-size="11px" fill="#000" textLength="40.1" lengthAdjust="spacing" xml:space="preserve">0.00000</text>
<text x="650.7" y="674" font-size="11px" fill="#000" textLength="40.3" lengthAdjust="spacing" xml:space="preserve">1.15611</text>
<text x="729.8" y="674" font-size="11px" fill="#000" textLength="40.1" lengthAdjust="spacing" xml:space="preserve">1.13124</text>
<text x="36.0" y="694" font-size="11px" fill="#fff" textLength="49.0" lengthAdjust="spacing" xml:space="preserve">62274104</text>
<text x="157.5" y="694" font-size="11px" fill="#fff" textLength="99.3" lengthAdjust="spacing" xml:space="preserve">2016.03.17 22:45:19</text>
<text x="284.9" y="694" font-size="11.8px" fill="#fff" textLength="43.3" lengthAdjust="spacing" xml:space="preserve">sell stop</text>
<text x="361.5" y="694" font-size="11px" fill="#fff" textLength="20.3" lengthAdjust="spacing" xml:space="preserve">0.01</text>
<text x="418.3" y="694" font-size="11.8px" fill="#fff" textLength="35.8" lengthAdjust="spacing" xml:space="preserve">eurusd</text>
<text x="492.4" y="694" font-size="11px" fill="#fff" textLength="40.3" lengthAdjust="spacing" xml:space="preserve">1.12626</text>
<text x="571.9" y="694" font-size="11px" fill="#fff" textLength="40.1" lengthAdjust="spacing" xml:space="preserve">0.00000</text>
<text x="650.7" y="694" font-size="11px" fill="#fff" textLength="40.3" lengthAdjust="spacing" xml:space="preserve">1.10626</text>
<text x="729.8" y="694" font-size="11px" fill="#fff" textLength="40.1" lengthAdjust="spacing" xml:space="preserve">1.13115</text>
<path d="M1044.5 667.5 L1050.5 673.5 M1050.5 667.5 L1044.5 673.5" stroke="#8c8c8c" stroke-width="1.6" fill="none"/>
<path d="M1044.5 687.5 L1050.5 693.5 M1050.5 687.5 L1044.5 693.5" stroke="#8fa8c8" stroke-width="1.6" fill="none"/>
<g transform="translate(18,663.5)"><path d="M0.5 0.5h7l3.5 3.5v9h-10.5z" fill="url(#pg)" stroke="#505050" stroke-width="1"/><path d="M7.5 0.5v3.5h3.5" fill="#e8e8e8" stroke="#505050" stroke-width="1"/><circle cx="10.5" cy="11.5" r="3.2" fill="url(#gb)" stroke="#333" stroke-width="0.4"/></g>
<g transform="translate(18,683.5)"><path d="M0.5 0.5h7l3.5 3.5v9h-10.5z" fill="url(#pg)" stroke="#505050" stroke-width="1"/><path d="M7.5 0.5v3.5h3.5" fill="#e8e8e8" stroke="#505050" stroke-width="1"/><circle cx="10.5" cy="11.5" r="3.2" fill="url(#gr)" stroke="#333" stroke-width="0.4"/></g>
</svg>
<div class="abs" style="left:1062px;top:0;width:1px;height:725px;background:linear-gradient(#383838 0,#404448 20px,#8890a0 32px,#909498 60px,#8c8c8c 100%)"></div>
</body></html>
